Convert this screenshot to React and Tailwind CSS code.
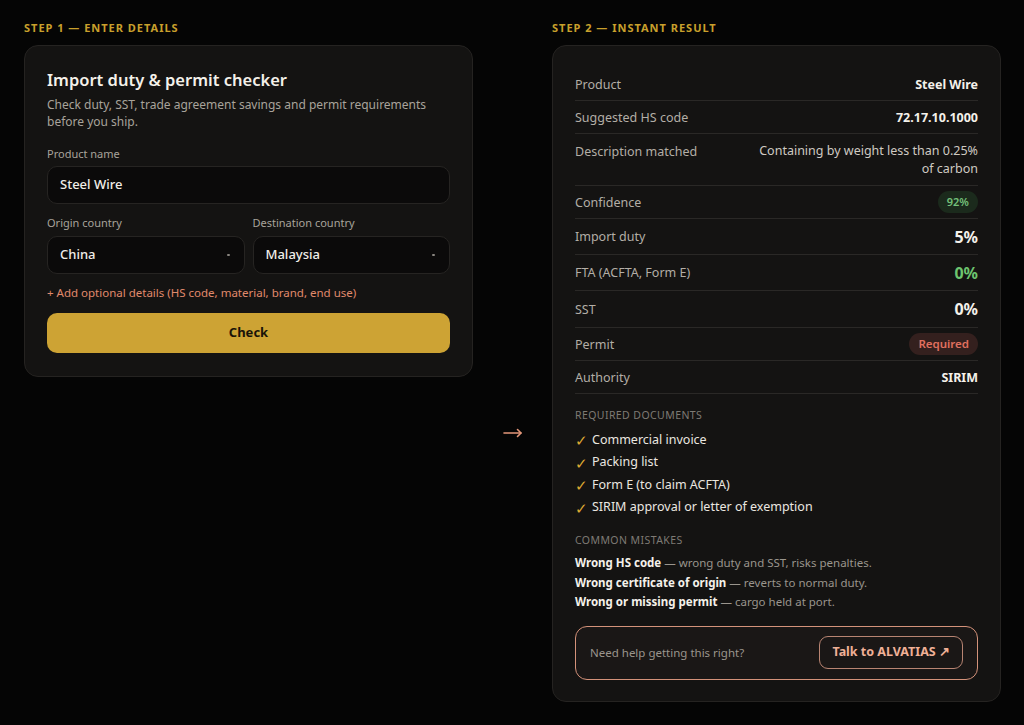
const rows = [
  { label: 'Product', value: 'Steel Wire', kind: 'text', h: 'h-[33px]' },
  { label: 'Suggested HS code', value: '72.17.10.1000', kind: 'text', h: 'h-[33px]' },
  { label: 'Description matched', value: 'Containing by weight less than 0.25% of carbon', kind: 'desc', h: 'h-[52px]' },
  { label: 'Confidence', value: '92%', kind: 'good-badge', h: 'h-[33px]' },
  { label: 'Import duty', value: '5%', kind: 'big', h: 'h-[36px]' },
  { label: 'FTA (ACFTA, Form E)', value: '0%', kind: 'big-green', h: 'h-[36px]' },
  { label: 'SST', value: '0%', kind: 'big', h: 'h-[37px]' },
  { label: 'Permit', value: 'Required', kind: 'bad-badge', h: 'h-[33px]' },
  { label: 'Authority', value: 'SIRIM', kind: 'text', h: 'h-[33px]' },
];

const docs = [
  'Commercial invoice',
  'Packing list',
  'Form E (to claim ACFTA)',
  'SIRIM approval or letter of exemption',
];

const mistakes = [
  ['Wrong HS code', 'wrong duty and SST, risks penalties.'],
  ['Wrong certificate of origin', 'reverts to normal duty.'],
  ['Wrong or missing permit', 'cargo held at port.'],
];

function StepLabel({ children }) {
  return (
    <div className="h-[45px] pt-[21px] text-[11px] leading-[14px] font-bold tracking-[0.09em] text-[#c9a02c] uppercase">
      {children}
    </div>
  );
}

function Value({ row }) {
  if (row.kind === 'desc') {
    return (
      <div className="w-[232px] text-right text-[12.5px] leading-[18px] text-[#cfcac2]">
        {row.value}
      </div>
    );
  }
  if (row.kind === 'good-badge') {
    return (
      <span className="rounded-full bg-[#1b2a1c] px-[9px] py-[3px] text-[11px] leading-[16px] font-semibold text-[#74c07a]">
        {row.value}
      </span>
    );
  }
  if (row.kind === 'bad-badge') {
    return (
      <span className="rounded-full bg-[#34201e] px-[9px] py-[3px] text-[11.5px] leading-[16px] font-semibold text-[#e0705f]">
        {row.value}
      </span>
    );
  }
  if (row.kind === 'big') {
    return <span className="text-[16px] leading-[20px] font-bold text-[#f4f1ea]">{row.value}</span>;
  }
  if (row.kind === 'big-green') {
    return <span className="text-[16px] leading-[20px] font-bold text-[#6dc46f]">{row.value}</span>;
  }
  return <span className="text-[12.5px] leading-[17px] font-bold text-[#f4f1ea]">{row.value}</span>;
}

function Select({ value }) {
  return (
    <div className="flex h-[38px] items-center justify-between rounded-[10px] border border-[#262422] bg-[#0b0a0a] pl-[12px] pr-[14px]">
      <span className="text-[13px] font-medium text-[#f1eee8]">{value}</span>
      <span className="h-[2px] w-[3px] rounded-full bg-[#8a8680]" />
    </div>
  );
}

export default function App() {
  return (
    <div
      className="min-h-[725px] bg-[#050505] px-[24px] text-[#e9e5de]"
      style={{ fontFamily: '"Noto Sans", "Open Sans", sans-serif' }}
    >
      <div className="grid grid-cols-[449px_79px_449px]">
        {/* Step 1 */}
        <div>
          <StepLabel>Step 1 — Enter details</StepLabel>
          <div className="rounded-[14px] border border-[#252321] bg-[#141312] px-[22px] pt-[23px] pb-[23px]">
            <h2 className="text-[16.5px] leading-[22px] font-semibold text-[#f4f1ea]">
              Import duty &amp; permit checker
            </h2>
            <p className="mt-[5px] text-[12px] leading-[17px] text-[#a8a39b]">
              Check duty, SST, trade agreement savings and permit requirements before you ship.
            </p>

            <div className="mt-[17px] text-[11px] leading-[14px] text-[#a8a39b]">Product name</div>
            <div className="mt-[5px] flex h-[38px] items-center rounded-[10px] border border-[#262422] bg-[#0b0a0a] px-[12px]">
              <span className="text-[13px] font-medium text-[#f1eee8]">Steel Wire</span>
            </div>

            <div className="mt-[12px] grid grid-cols-2 gap-[8px]">
              <div>
                <div className="text-[11px] leading-[14px] text-[#a8a39b]">Origin country</div>
                <div className="mt-[6px]">
                  <Select value="China" />
                </div>
              </div>
              <div>
                <div className="text-[11px] leading-[14px] text-[#a8a39b]">Destination country</div>
                <div className="mt-[6px]">
                  <Select value="Malaysia" />
                </div>
              </div>
            </div>

            <div className="mt-[11px] text-[11.5px] leading-[16px] text-[#e08a6c]">
              + Add optional details (HS code, material, brand, end use)
            </div>

            <button className="mt-[12px] flex h-[40px] w-full items-center justify-center rounded-[10px] bg-[#cda334] text-[13px] font-bold text-[#1a1408]">
              Check
            </button>
          </div>
        </div>

        {/* Arrow */}
        <div className="flex items-start justify-center pt-[427px]">
          <svg width="20" height="12" viewBox="0 0 20 12" fill="none" className="text-[#e4977a]">
            <path d="M1 6h17" stroke="currentColor" strokeWidth="1.6" strokeLinecap="round" />
            <path d="M14.5 2.5L18 6l-3.5 3.5" stroke="currentColor" strokeWidth="1.6" strokeLinecap="round" strokeLinejoin="round" />
          </svg>
        </div>

        {/* Step 2 */}
        <div className="pb-[24px]">
          <StepLabel>Step 2 — Instant result</StepLabel>
          <div className="rounded-[14px] border border-[#252321] bg-[#141312] px-[22px] pt-[22px] pb-[21px]">
            <div>
              {rows.map((row) => (
                <div
                  key={row.label}
                  className={`flex items-center justify-between border-b border-[#2a2826] ${row.h}`}
                >
                  <span
                    className={`text-[12.5px] leading-[17px] text-[#b3aea6] ${row.kind === 'desc' ? 'self-start pt-[9px]' : ''}`}
                  >
                    {row.label}
                  </span>
                  <Value row={row} />
                </div>
              ))}
            </div>

            <div className="mt-[14px] text-[10.5px] leading-[14px] tracking-[0.04em] text-[#7e7a74] uppercase">
              Required documents
            </div>
            <ul className="mt-[7px]">
              {docs.map((d) => (
                <li key={d} className="flex h-[22.5px] items-center gap-[7px] text-[12.5px] text-[#ebe7e0]">
                  <span className="w-[10px] text-[15px] leading-[18px] text-[#dca833]">✓</span>
                  {d}
                </li>
              ))}
            </ul>

            <div className="mt-[14px] text-[10.5px] leading-[14px] tracking-[0.04em] text-[#7e7a74] uppercase">
              Common mistakes
            </div>
            <div className="mt-[6px]">
              {mistakes.map(([b, rest]) => (
                <div key={b} className="h-[19.5px] text-[11.5px] leading-[19.5px] text-[#9a958d]">
                  <span className="font-bold text-[#f4f1ea]">{b}</span> — {rest}
                </div>
              ))}
            </div>

            <div className="mt-[14px] flex h-[54px] items-center justify-between rounded-[12px] border border-[#d4927a] bg-[#1a1716] pl-[14px] pr-[14px]">
              <span className="text-[11.5px] text-[#9a958d]">Need help getting this right?</span>
              <button className="flex h-[33px] items-center rounded-[9px] border border-[#b88472] px-[12px] text-[12.5px] font-bold text-[#f0b096]">
                Talk to ALVATIAS ↗
              </button>
            </div>
          </div>
        </div>
      </div>
    </div>
  );
}
